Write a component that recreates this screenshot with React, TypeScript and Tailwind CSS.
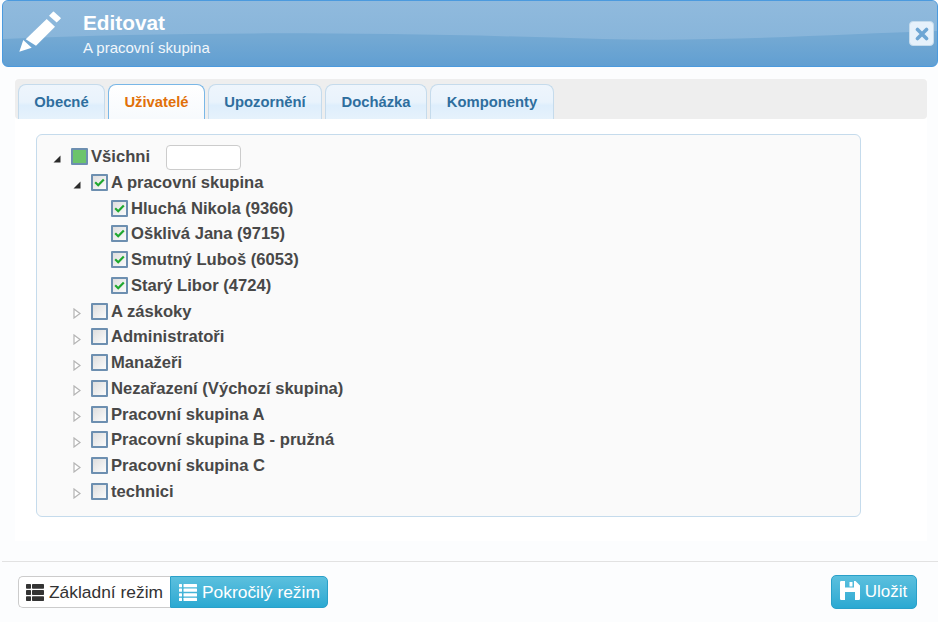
import React from "react";

const Pencil = () => (
  <svg width="44" height="42" viewBox="0 0 44 42" className="block" fill="#fff">
    <path d="M1.3 40.7 L5.3 29 L13.7 36.7 Z" />
    <path d="M7.7 28.3 L28.7 8 L37 15.7 L18 34.7 Z" />
    <path d="M31 4.7 L35 0.7 Q35.4 0.3 35.9 0.7 L42.6 6.8 Q43 7.3 42.6 7.7 L38.7 11.5 Z" />
  </svg>
);

const ThList = ({ className }: { className: string }) => (
  <svg width="18" height="17" viewBox="0 0 18 17" className={className} fill="currentColor">
    <rect x="0" y="0" width="5" height="4.8" rx="0.7" />
    <rect x="6" y="0" width="12" height="4.8" rx="0.7" />
    <rect x="0" y="6.1" width="5" height="4.8" rx="0.7" />
    <rect x="6" y="6.1" width="12" height="4.8" rx="0.7" />
    <rect x="0" y="12.2" width="5" height="4.8" rx="0.7" />
    <rect x="6" y="12.2" width="12" height="4.8" rx="0.7" />
  </svg>
);

const LinesList = ({ className }: { className: string }) => (
  <svg width="18" height="17" viewBox="0 0 18 17" className={className} fill="currentColor">
    {[0, 4.6, 9.2, 13.8].map((y) => (
      <g key={y}>
        <rect x="0" y={y} width="3" height="3.2" rx="0.5" />
        <rect x="4.5" y={y} width="13.5" height="3.2" rx="0.5" />
      </g>
    ))}
  </svg>
);

const Save = () => (
  <svg width="20" height="19" viewBox="0 0 20 19" className="block" fill="#fff">
    <path fillRule="evenodd" d="M1.2 0 H15.5 L20 4.5 V17.8 Q20 19 18.8 19 H1.2 Q0 19 0 17.8 V1.2 Q0 0 1.2 0 Z M5 0 V6.5 H14 V0 Z M5 11 V19 H15 V11 Z M9.5 1 H12.5 V5.5 H9.5 Z" />
  </svg>
);

const Expander = ({ open }: { open: boolean }) =>
  open ? (
    <svg width="8" height="8" viewBox="0 0 8 8" className="block">
      <path d="M7.5 0.5 V7.5 H0.5 Z" fill="#2b2b2b" />
    </svg>
  ) : (
    <svg width="8" height="11" viewBox="0 0 8 11" className="block">
      <path d="M1 1 L7 5.5 L1 10 Z" fill="#fff" stroke="#b4b4b4" strokeWidth="1.2" />
    </svg>
  );

const Box = ({ state }: { state: "none" | "check" | "part" }) => (
  <span className="mb-[2px] flex h-[17px] w-[17px] shrink-0 items-center justify-center rounded-[1px] border-2 border-[#6d8fb0] bg-gradient-to-br from-[#dedede] to-[#fbfbfb]">
    {state === "part" && <span className="block h-[13px] w-[13px] bg-[#6cc46c]" />}
    {state === "check" && (
      <svg width="11" height="9" viewBox="0 0 11 9">
        <path d="M1.2 4.3 L4.2 7.2 L9.8 1.4" fill="none" stroke="#1fa82f" strokeWidth="2.2" />
      </svg>
    )}
  </span>
);

const Row = ({
  indent,
  exp,
  state,
  label,
  children,
}: {
  indent: number;
  exp?: "open" | "closed";
  state: "none" | "check" | "part";
  label: string;
  children?: React.ReactNode;
}) => (
  <div className="flex h-[25.74px] items-center" style={{ paddingLeft: indent }}>
    <span className="flex w-[18px] shrink-0 items-center justify-start pt-[3px]">
      {exp && <Expander open={exp === "open"} />}
    </span>
    <Box state={state} />
    <span className="ml-[3px] whitespace-nowrap">{label}</span>
    {children}
  </div>
);

const tabs = [
  { t: "Obecné", w: "w-[87px]" },
  { t: "Uživatelé", w: "w-[97px]", active: true },
  { t: "Upozornění", w: "w-[114px]" },
  { t: "Docházka", w: "w-[102px]" },
  { t: "Komponenty", w: "w-[124px]" },
];

const closedGroups = [
  "A záskoky",
  "Administratoři",
  "Manažeři",
  "Nezařazení (Výchozí skupina)",
  "Pracovní skupina A",
  "Pracovní skupina B - pružná",
  "Pracovní skupina C",
  "technici",
];

export default function App() {
  return (
    <div className="relative h-[622px] w-[938px] overflow-hidden bg-[#fcfdfe] font-['Liberation_Sans',Arial,sans-serif]">
      <div className="relative ml-[2px] flex h-[67px] w-[936px] items-start overflow-hidden rounded-[6px] border border-[#4b9ade] bg-[linear-gradient(#76aad4_0%,#74a9d3_55%,#619fd2_100%)] pl-[15px] text-white">
        <svg className="absolute left-0 top-0" width="936" height="40" viewBox="0 0 936 40" preserveAspectRatio="none">
          <defs>
            <linearGradient id="gloss" x1="0" y1="0" x2="0" y2="1">
              <stop offset="0" stopColor="#90badd" />
              <stop offset="1" stopColor="#88b5da" />
            </linearGradient>
          </defs>
          <path d="M0 38 C180 30 380 31 600 38 C720 41 840 33 936 30 V0 H0 Z" fill="url(#gloss)" />
        </svg>
        <div className="relative mt-[10px]">
          <Pencil />
        </div>
        <div className="relative ml-[21px]">
          <div className="mt-[10px] text-[20.8px] font-bold leading-[24px]">Editovat</div>
          <div className="mt-[4px] text-[15px] leading-[18px] text-[#f2f7fb]">A pracovní skupina</div>
        </div>
        <div className="relative ml-auto mr-[3px] mt-[20px] flex h-[25px] w-[25px] items-center justify-center rounded-[4px] border border-[#c5dbec] bg-[#e6f1fb]">
          <svg width="14" height="14" viewBox="0 0 14 14">
            <path d="M2.5 2.5 L11.5 11.5 M11.5 2.5 L2.5 11.5" stroke="#6ea6d4" strokeWidth="3.6" strokeLinecap="round" />
          </svg>
        </div>
      </div>

      <div className="ml-[15px] mt-[12px] w-[912px] bg-white">
        <div className="flex h-[40px] items-end gap-[3px] rounded-[4px] bg-[#eeeeee] pl-[3px]">
          {tabs.map((tab) => (
            <div
              key={tab.t}
              className={`flex h-[35px] items-center justify-center rounded-t-[8px] border border-b-0 text-[14.8px] font-bold ${tab.w} ${
                tab.active
                  ? "border-[#79b7e7] bg-gradient-to-b from-[#ffffff] to-[#f7fafd] text-[#e17009]"
                  : "border-[#c5dbec] bg-[linear-gradient(#eef5fc_0%,#e9f3fc_50%,#deeefc_60%,#e6f2fc_100%)] text-[#2e6e9e]"
              }`}
            >
              {tab.t}
            </div>
          ))}
        </div>
        <div className="h-[422px] px-[21px] pt-[15px]">
          <div className="h-[383px] w-[825px] rounded-[6px] border border-[#c5dbec] bg-[#fafafa] pl-[16px] pt-[9.8px] text-[16.6px] font-bold text-[#484848]">
            <Row indent={0} exp="open" state="part" label="Všichni">
              <span className="ml-[16px] block h-[25px] w-[75px] rounded-[4px] border border-[#cccccc] bg-white" />
            </Row>
            <Row indent={20} exp="open" state="check" label="A pracovní skupina" />
            <Row indent={40} state="check" label="Hluchá Nikola (9366)" />
            <Row indent={40} state="check" label="Ošklivá Jana (9715)" />
            <Row indent={40} state="check" label="Smutný Luboš (6053)" />
            <Row indent={40} state="check" label="Starý Libor (4724)" />
            {closedGroups.map((g) => (
              <Row key={g} indent={20} exp="closed" state="none" label={g} />
            ))}
          </div>
        </div>
      </div>

      <div className="ml-[2px] mt-[20px] flex h-[61px] items-start justify-between border-t border-[#e2e2e2] pl-[16px] pr-[21px] pt-[14px]">
        <div className="flex h-[32px] text-[17.4px]">
          <div className="flex w-[152px] items-center gap-[5px] rounded-l-[5px] border border-r-0 border-[#cccccc] bg-white pl-[7px] text-[#333333]">
            <ThList className="block text-[#333333]" />
            <span>Základní režim</span>
          </div>
          <div className="flex w-[158px] items-center gap-[5px] rounded-r-[5px] border border-[#2aa0c9] bg-gradient-to-b from-[#5bc0de] to-[#2aa9d2] pl-[8px] text-white">
            <LinesList className="block text-white" />
            <span>Pokročilý režim</span>
          </div>
        </div>
        <div className="-mt-px flex h-[34px] w-[86px] items-center justify-center gap-[5px] rounded-[5px] border border-[#2aa0c9] bg-gradient-to-b from-[#5bc0de] to-[#2aa9d2] pr-[1px] text-[17px] text-white">
          <span className="-mt-[3px]"><Save /></span>
          <span>Uložit</span>
        </div>
      </div>
    </div>
  );
}
